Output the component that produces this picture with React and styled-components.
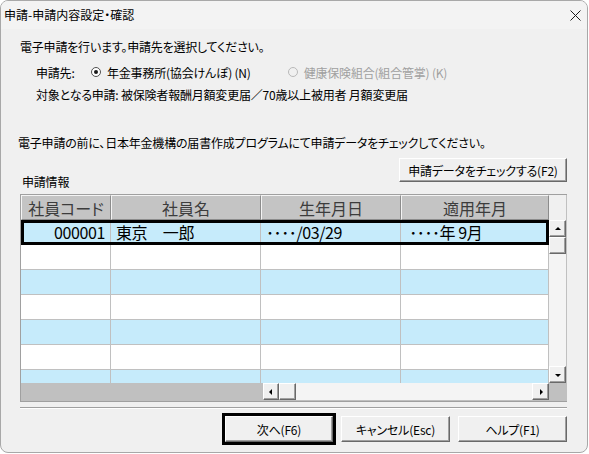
import React from "react";
import styled, { createGlobalStyle, css } from "styled-components";

const GlobalStyle = createGlobalStyle`
  html, body {
    margin: 0;
    padding: 0;
    background: #ffffff;
  }
  body {
    font-family: "Noto Sans CJK JP", "Noto Sans", sans-serif;
    font-feature-settings: "palt";
    color: #000;
  }
`;

const rows = [
  { code: "000001", name: "東京　一郎", birth: "････/03/29", month: " ････年 9月", selected: true },
  {},
  {},
  {},
  {},
  {},
  {},
];

const columns = [
  { title: "社員コード", width: 90 },
  { title: "社員名", width: 150 },
  { title: "生年月日", width: 140 },
  { title: "適用年月", width: 148 },
];

function CloseIcon() {
  return (
    <svg width="11" height="11" viewBox="0 0 11 11">
      <path d="M0.5 0.5 L10.5 10.5 M10.5 0.5 L0.5 10.5" stroke="#1a1a1a" strokeWidth="1" />
    </svg>
  );
}

function RadioMark({ checked, disabled }) {
  return (
    <svg width="12" height="12" viewBox="0 0 12 12">
      <circle
        cx="6"
        cy="6"
        r="4.5"
        fill={disabled ? "#f0f0f0" : "#fff"}
        stroke={disabled ? "#b8b8b8" : "#505050"}
        strokeWidth="1"
      />
      {checked && <circle cx="6" cy="6" r="2" fill="#1a1a1a" />}
    </svg>
  );
}

function Arrow({ dir }) {
  const d = {
    up: "M1 5 L4 2 L7 5 Z",
    down: "M1 3 L4 6 L7 3 Z",
    left: "M5 1 L2 4 L5 7 Z",
    right: "M3 1 L6 4 L3 7 Z",
  }[dir];
  return (
    <svg width="8" height="8" viewBox="0 0 8 8">
      <path d={d} fill="#000" />
    </svg>
  );
}

function App() {
  return (
    <>
      <GlobalStyle />
      <Window>
        <TitleBar>
          <Title>申請-申請内容設定・確認</Title>
          <CloseIcon />
        </TitleBar>

        <Content>
          <Text>電子申請を行います。申請先を選択してください。</Text>

          <RadioRow>
            <FieldLabel>申請先:</FieldLabel>
            <Radio>
              <RadioMark checked />
              <span>年金事務所(協会けんぽ) (N)</span>
            </Radio>
            <Radio disabled>
              <RadioMark disabled />
              <span>健康保険組合(組合管掌) (K)</span>
            </Radio>
          </RadioRow>

          <TargetText>対象となる申請: 被保険者報酬月額変更届／70歳以上被用者 月額変更届</TargetText>

          <Notice>電子申請の前に、日本年金機構の届書作成プログラムにて申請データをチェックしてください。</Notice>

          <ToolRow>
            <SectionLabel>申請情報</SectionLabel>
            <Button $w={168} $h={24}>申請データをチェックする(F2)</Button>
          </ToolRow>

          <Grid>
            <HeaderRow>
              {columns.map((c) => (
                <HeaderCell key={c.title} $w={c.width}>
                  {c.title}
                </HeaderCell>
              ))}
            </HeaderRow>
            <Corner />

            <Body>
              {rows.map((r, i) => (
                <Row key={i} $alt={i % 2 === 0} $selected={r.selected}>
                  <Cell $w={90} $right>{r.code}</Cell>
                  <Cell $w={150}>{r.name}</Cell>
                  <Cell $w={140}>{r.birth}</Cell>
                  <Cell $w={148}>{r.month}</Cell>
                </Row>
              ))}
            </Body>

            <VScroll>
              <ScrollButton $size={17}>
                <Arrow dir="up" />
              </ScrollButton>
              <ScrollButton $size={17} />
              <Track />
              <ScrollButton $size={17}>
                <Arrow dir="down" />
              </ScrollButton>
            </VScroll>

            <HScrollArea>
              <HScroll>
                <ScrollButton $size={16}>
                  <Arrow dir="left" />
                </ScrollButton>
                <ScrollButton $size={17} />
                <Track />
                <ScrollButton $size={17}>
                  <Arrow dir="right" />
                </ScrollButton>
              </HScroll>
            </HScrollArea>
            <GrayCorner />
          </Grid>

          <Separator />

          <ButtonRow>
            <DefaultFrame>
              <Button $w={108} $h={26}>次へ(F6)</Button>
            </DefaultFrame>
            <Button $w={109} $h={26}>キャンセル(Esc)</Button>
            <Button $w={109} $h={26}>ヘルプ(F1)</Button>
          </ButtonRow>
        </Content>
      </Window>
    </>
  );
}

export default App;

const Window = styled.div`
  box-sizing: border-box;
  width: 588px;
  height: 453px;
  background: #f0f0f0;
  border: 1px solid #a8a8a8;
  border-radius: 8px;
  display: flex;
  flex-direction: column;
  overflow: hidden;
`;

const TitleBar = styled.div`
  height: 28px;
  flex-shrink: 0;
  display: flex;
  align-items: center;
  justify-content: space-between;
  padding: 0 6px 0 3px;
  background: #f3f3f3;
`;

const Title = styled.div`
  font-size: 12px;
  line-height: 16px;
`;

const Content = styled.div`
  display: flex;
  flex-direction: column;
  padding: 0 20px 0 19px;
  letter-spacing: -0.2px;
`;

const Text = styled.div`
  font-size: 12px;
  line-height: 16px;
  margin-top: 10px;
`;

const RadioRow = styled.div`
  display: flex;
  align-items: center;
  height: 16px;
  margin-top: 9px;
  padding-left: 16px;
  font-size: 12px;
`;

const FieldLabel = styled.span`
  width: 54px;
`;

const Radio = styled.label`
  display: flex;
  align-items: center;
  gap: 5px;
  margin-right: 36px;
  color: ${(p) => (p.disabled ? "#a0a0a0" : "#000")};
`;

const TargetText = styled.div`
  font-size: 12px;
  line-height: 16px;
  margin-top: 7px;
  padding-left: 16px;
`;

const Notice = styled.div`
  font-size: 12px;
  line-height: 16px;
  margin-top: 32px;
  margin-left: -2px;
`;

const ToolRow = styled.div`
  display: flex;
  justify-content: space-between;
  align-items: flex-start;
  height: 36px;
  margin-top: 7px;
`;

const SectionLabel = styled.div`
  align-self: flex-end;
  font-size: 12px;
  line-height: 16px;
  margin: 0 0 4px 2px;
`;

const bevel = css`
  background: #f0f0f0;
  border-style: solid;
  border-width: 1px;
  border-color: #ffffff #696969 #696969 #ffffff;
  box-shadow: inset -1px -1px 0 #a0a0a0;
`;

const Button = styled.div`
  box-sizing: border-box;
  width: ${(p) => p.$w}px;
  height: ${(p) => p.$h}px;
  ${bevel};
  display: flex;
  align-items: center;
  justify-content: center;
  font-size: 12px;
  color: #000;
`;

const Grid = styled.div`
  display: grid;
  grid-template-columns: 528px 17px;
  grid-template-rows: 25px 163px 18px;
  border: 1px solid #a0a0a0;
  border-right: none;
  background: #c0c0c0;
  letter-spacing: normal;
`;

const HeaderRow = styled.div`
  display: flex;
`;

const HeaderCell = styled.div`
  box-sizing: border-box;
  width: ${(p) => p.$w}px;
  height: 25px;
  background: #c4c4c4;
  border-top: 1px solid #f4f4f4;
  border-left: 1px solid #f4f4f4;
  border-right: 1px solid #8c8c8c;
  border-bottom: 1px solid #8c8c8c;
  display: flex;
  align-items: center;
  justify-content: center;
  font-size: 16px;
  color: #3c3c3c;
`;

const Corner = styled.div`
  background: #f0f0f0;
`;

const Body = styled.div`
  overflow: hidden;
  background: #ffffff;
`;

const Row = styled.div`
  position: relative;
  display: flex;
  height: 25px;
  box-sizing: border-box;
  border-bottom: 1px solid #c0c0c0;
  background: ${(p) => (p.$alt ? "#c6ebfb" : "#ffffff")};
  ${(p) =>
    p.$selected &&
    css`
      &::after {
        content: "";
        position: absolute;
        inset: 0 0 -1px 0;
        border: 3px solid #000;
      }
    `}
`;

const Cell = styled.div`
  box-sizing: border-box;
  width: ${(p) => p.$w}px;
  border-right: 1px solid #c0c0c0;
  padding: 0 5px;
  display: flex;
  align-items: center;
  justify-content: ${(p) => (p.$right ? "flex-end" : "flex-start")};
  font-size: 16px;
  white-space: pre;
  letter-spacing: -0.4px;
`;

const VScroll = styled.div`
  display: flex;
  flex-direction: column;
  background: #f4f4f4;
`;

const ScrollButton = styled.div`
  box-sizing: border-box;
  width: ${(p) => p.$size}px;
  height: 17px;
  flex-shrink: 0;
  ${bevel};
  display: flex;
  align-items: center;
  justify-content: center;
`;

const Track = styled.div`
  flex: 1;
  background-color: #f4f4f4;
  background-image: radial-gradient(#e4e4e4 0.6px, transparent 0.7px);
  background-size: 2px 2px;
`;

const HScrollArea = styled.div`
  display: flex;
  justify-content: flex-end;
  align-items: flex-start;
  background: #c0c0c0;
`;

const HScroll = styled.div`
  display: flex;
  width: 286px;
  height: 17px;
  background: #f4f4f4;
`;

const GrayCorner = styled.div`
  background: #c0c0c0;
`;

const Separator = styled.div`
  height: 0;
  margin-top: 5px;
  border-top: 1px solid #a0a0a0;
  border-bottom: 1px solid #ffffff;
`;

const ButtonRow = styled.div`
  display: flex;
  justify-content: flex-end;
  gap: 8px;
  margin-top: 7px;
  padding-right: 0;
`;

const DefaultFrame = styled.div`
  border: 3px solid #000;
  margin: -3px -3px -3px 0;
`;
